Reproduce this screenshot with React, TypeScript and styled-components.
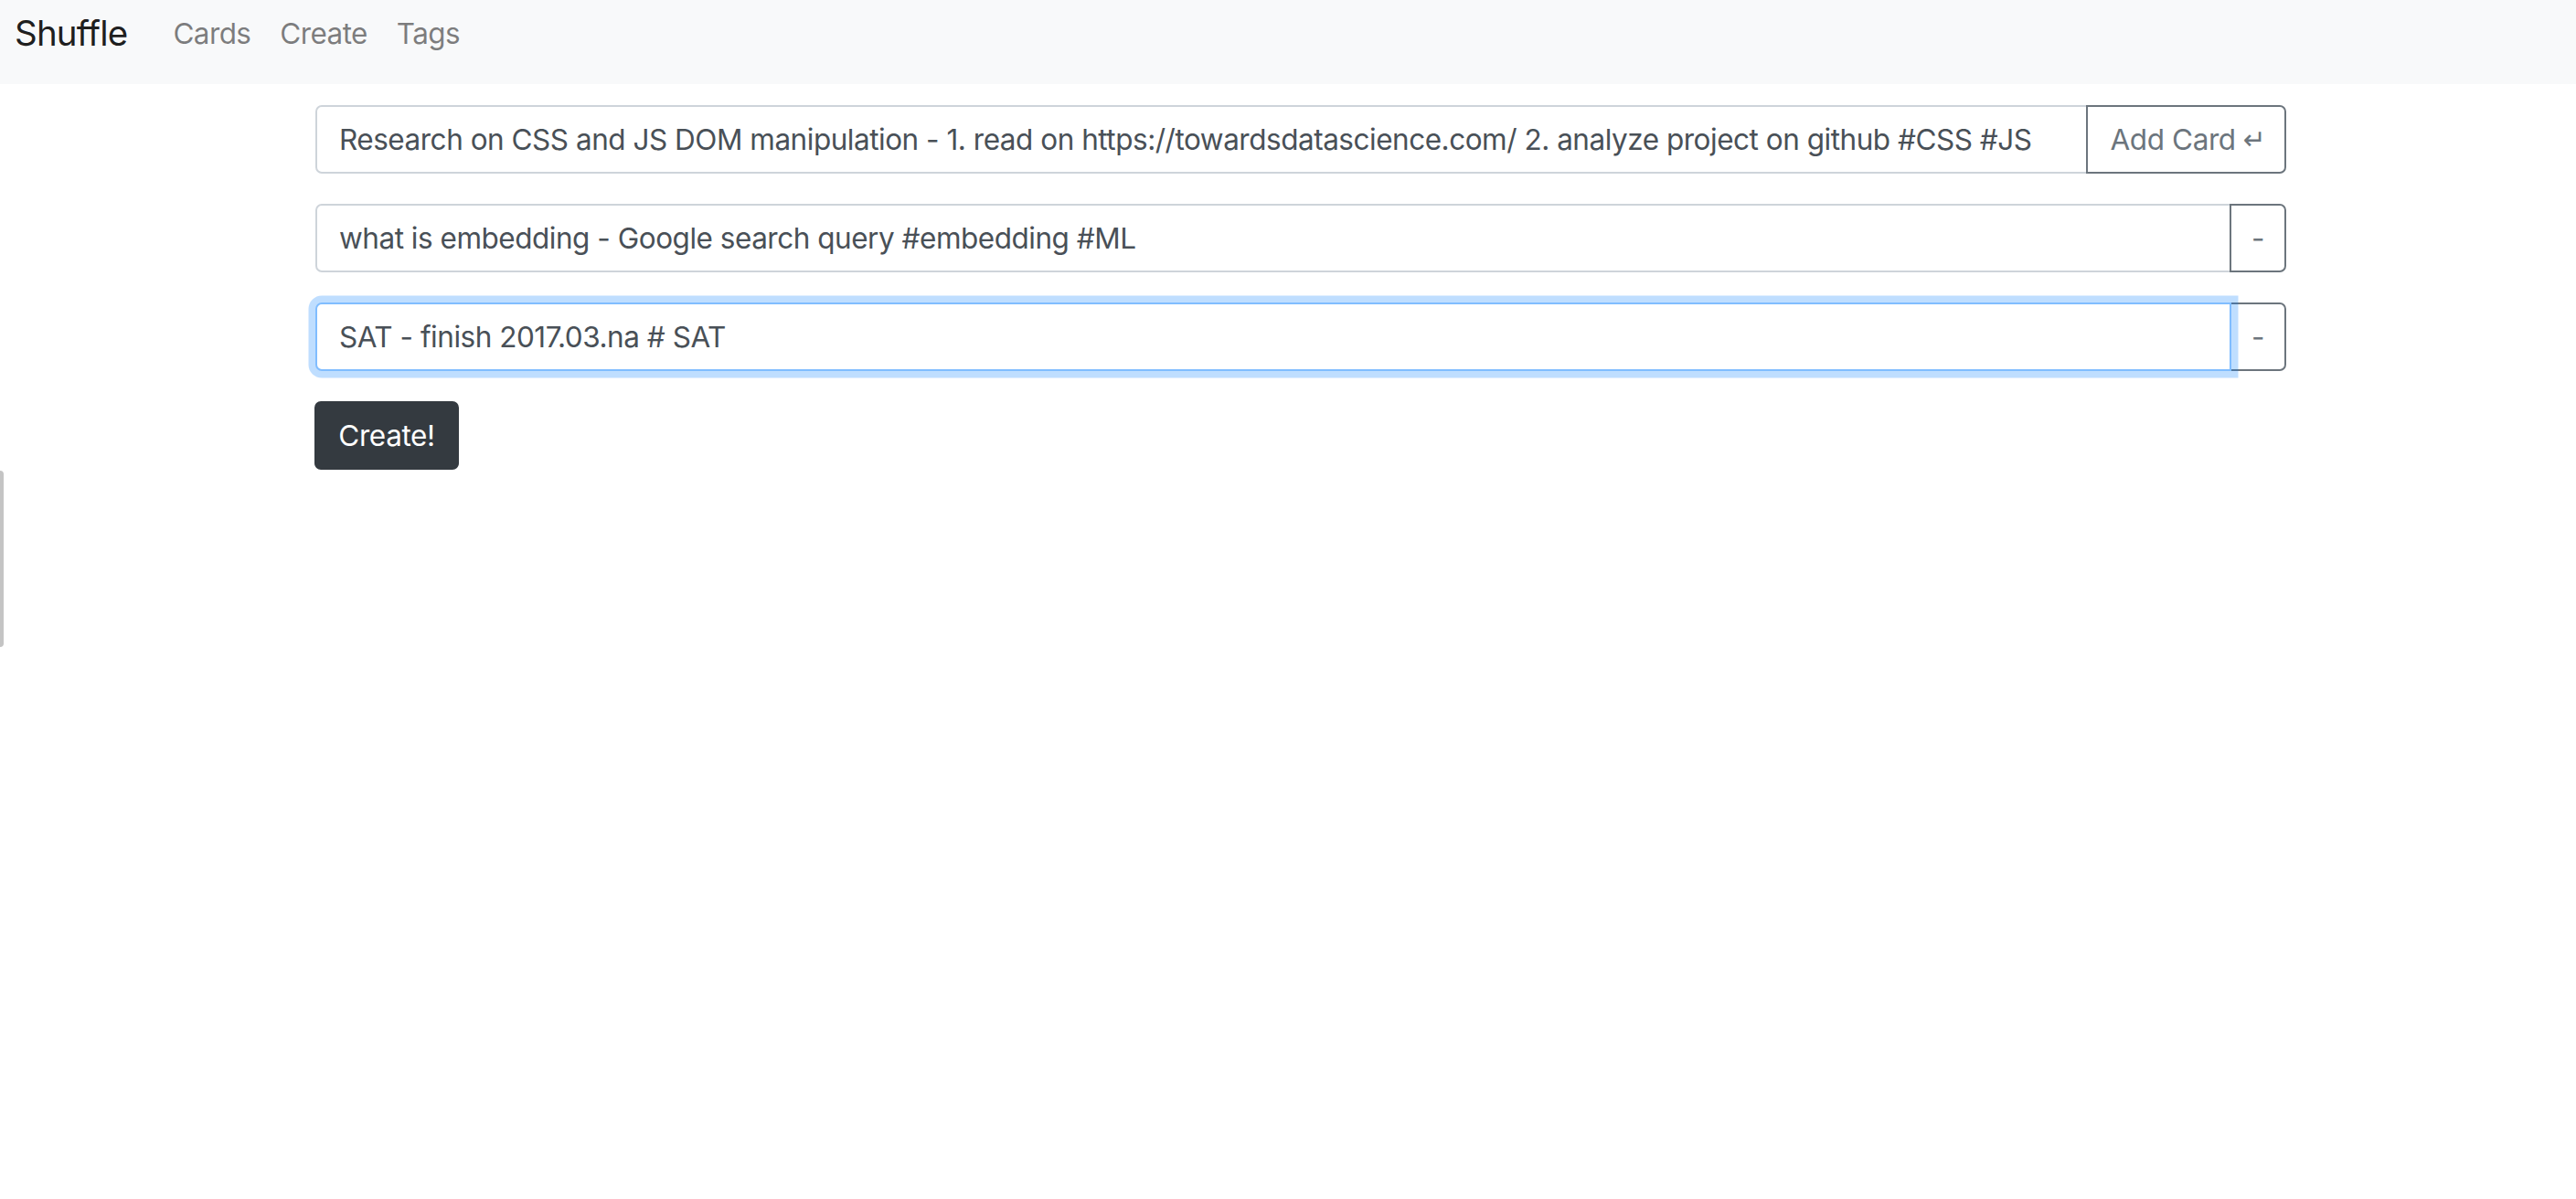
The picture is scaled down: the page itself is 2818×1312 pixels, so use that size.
import React from 'react';
import styled, { createGlobalStyle } from 'styled-components';

const GlobalStyle = createGlobalStyle`
  html, body {
    margin: 0;
    padding: 0;
    background: #fff;
    font-family: Inter, "Noto Sans", "Liberation Sans", sans-serif;
    color: #212529;
  }
`;

const NavBar = styled.nav`
  display: flex;
  align-items: flex-start;
  height: 92px;
  padding: 0 0 0 16px;
  background: #f8f9fa;
  box-sizing: border-box;
`;

const Brand = styled.a`
  font-size: 38.5px;
  line-height: 58px;
  padding-top: 7px;
  margin-right: 34px;
  color: rgba(0, 0, 0, 0.9);
  text-decoration: none;
  letter-spacing: -0.8px;
`;

const NavLink = styled.a`
  font-size: 31.5px;
  line-height: 47px;
  padding: 13px 16px 0;
  color: rgba(0, 0, 0, 0.5);
  text-decoration: none;
  letter-spacing: -0.6px;
`;

const Main = styled.main`
  width: 2156px;
  margin: 23px 0 0 345px;
  display: flex;
  flex-direction: column;
  gap: 33px;
`;

const InputGroup = styled.div`
  display: flex;
  height: 75px;
`;

const TextField = styled.input<{ $focused?: boolean }>`
  flex: 1;
  min-width: 0;
  height: 75px;
  box-sizing: border-box;
  padding: 0 24px;
  font-family: inherit;
  font-size: 31.5px;
  letter-spacing: -0.48px;
  color: #495057;
  background: #fff;
  border: 2px solid ${p => (p.$focused ? '#80bdff' : '#ced4da')};
  border-radius: 7px 0 0 7px;
  outline: none;
  position: relative;
  z-index: ${p => (p.$focused ? 3 : 1)};
  box-shadow: ${p => (p.$focused ? '0 0 0 7.5px rgba(0, 123, 255, 0.25)' : 'none')};
`;

const OutlineButton = styled.button<{ $wide?: boolean }>`
  height: 75px;
  box-sizing: border-box;
  margin-left: -2px;
  padding: ${p => (p.$wide ? '0 20px 0 24px' : '0')};
  width: ${p => (p.$wide ? '219px' : '62px')};
  font-family: inherit;
  font-size: 31.5px;
  letter-spacing: -0.4px;
  color: #6c757d;
  background: transparent;
  border: 2px solid #6c757d;
  border-radius: 0 7px 7px 0;
  position: relative;
  z-index: 2;
  white-space: nowrap;
  display: flex;
  align-items: center;
  justify-content: center;
`;

const Arrow = styled.span`
  font-family: "DejaVu Sans", sans-serif;
  font-size: 30px;
  margin-left: 8px;
  line-height: 1;
`;

const CreateButton = styled.button`
  align-self: flex-start;
  width: 158px;
  height: 75px;
  margin-left: -1px;
  font-family: inherit;
  font-size: 31.5px;
  letter-spacing: -0.4px;
  color: #fff;
  background: #343a40;
  border: 2px solid #343a40;
  border-radius: 7px;
`;

const SideTab = styled.div`
  position: fixed;
  left: 0;
  top: 515px;
  width: 4px;
  height: 193px;
  background: #c4c4c4;
  border-radius: 0 4px 4px 0;
`;

const cards = [
  'what is embedding - Google search query #embedding #ML',
  'SAT - finish 2017.03.na # SAT',
];

export default function App() {
  return (
    <>
      <GlobalStyle />
      <NavBar>
        <Brand href="#">Shuffle</Brand>
        <NavLink href="#">Cards</NavLink>
        <NavLink href="#">Create</NavLink>
        <NavLink href="#">Tags</NavLink>
      </NavBar>
      <Main>
        <InputGroup>
          <TextField
            readOnly
            value="Research on CSS and JS DOM manipulation - 1. read on https://towardsdatascience.com/ 2. analyze project on github #CSS #JS"
          />
          <OutlineButton $wide>
            Add Card<Arrow>↵</Arrow>
          </OutlineButton>
        </InputGroup>
        {cards.map((text, i) => (
          <InputGroup key={text}>
            <TextField readOnly value={text} $focused={i === cards.length - 1} />
            <OutlineButton>-</OutlineButton>
          </InputGroup>
        ))}
        <CreateButton>Create!</CreateButton>
      </Main>
      <SideTab />
    </>
  );
}
